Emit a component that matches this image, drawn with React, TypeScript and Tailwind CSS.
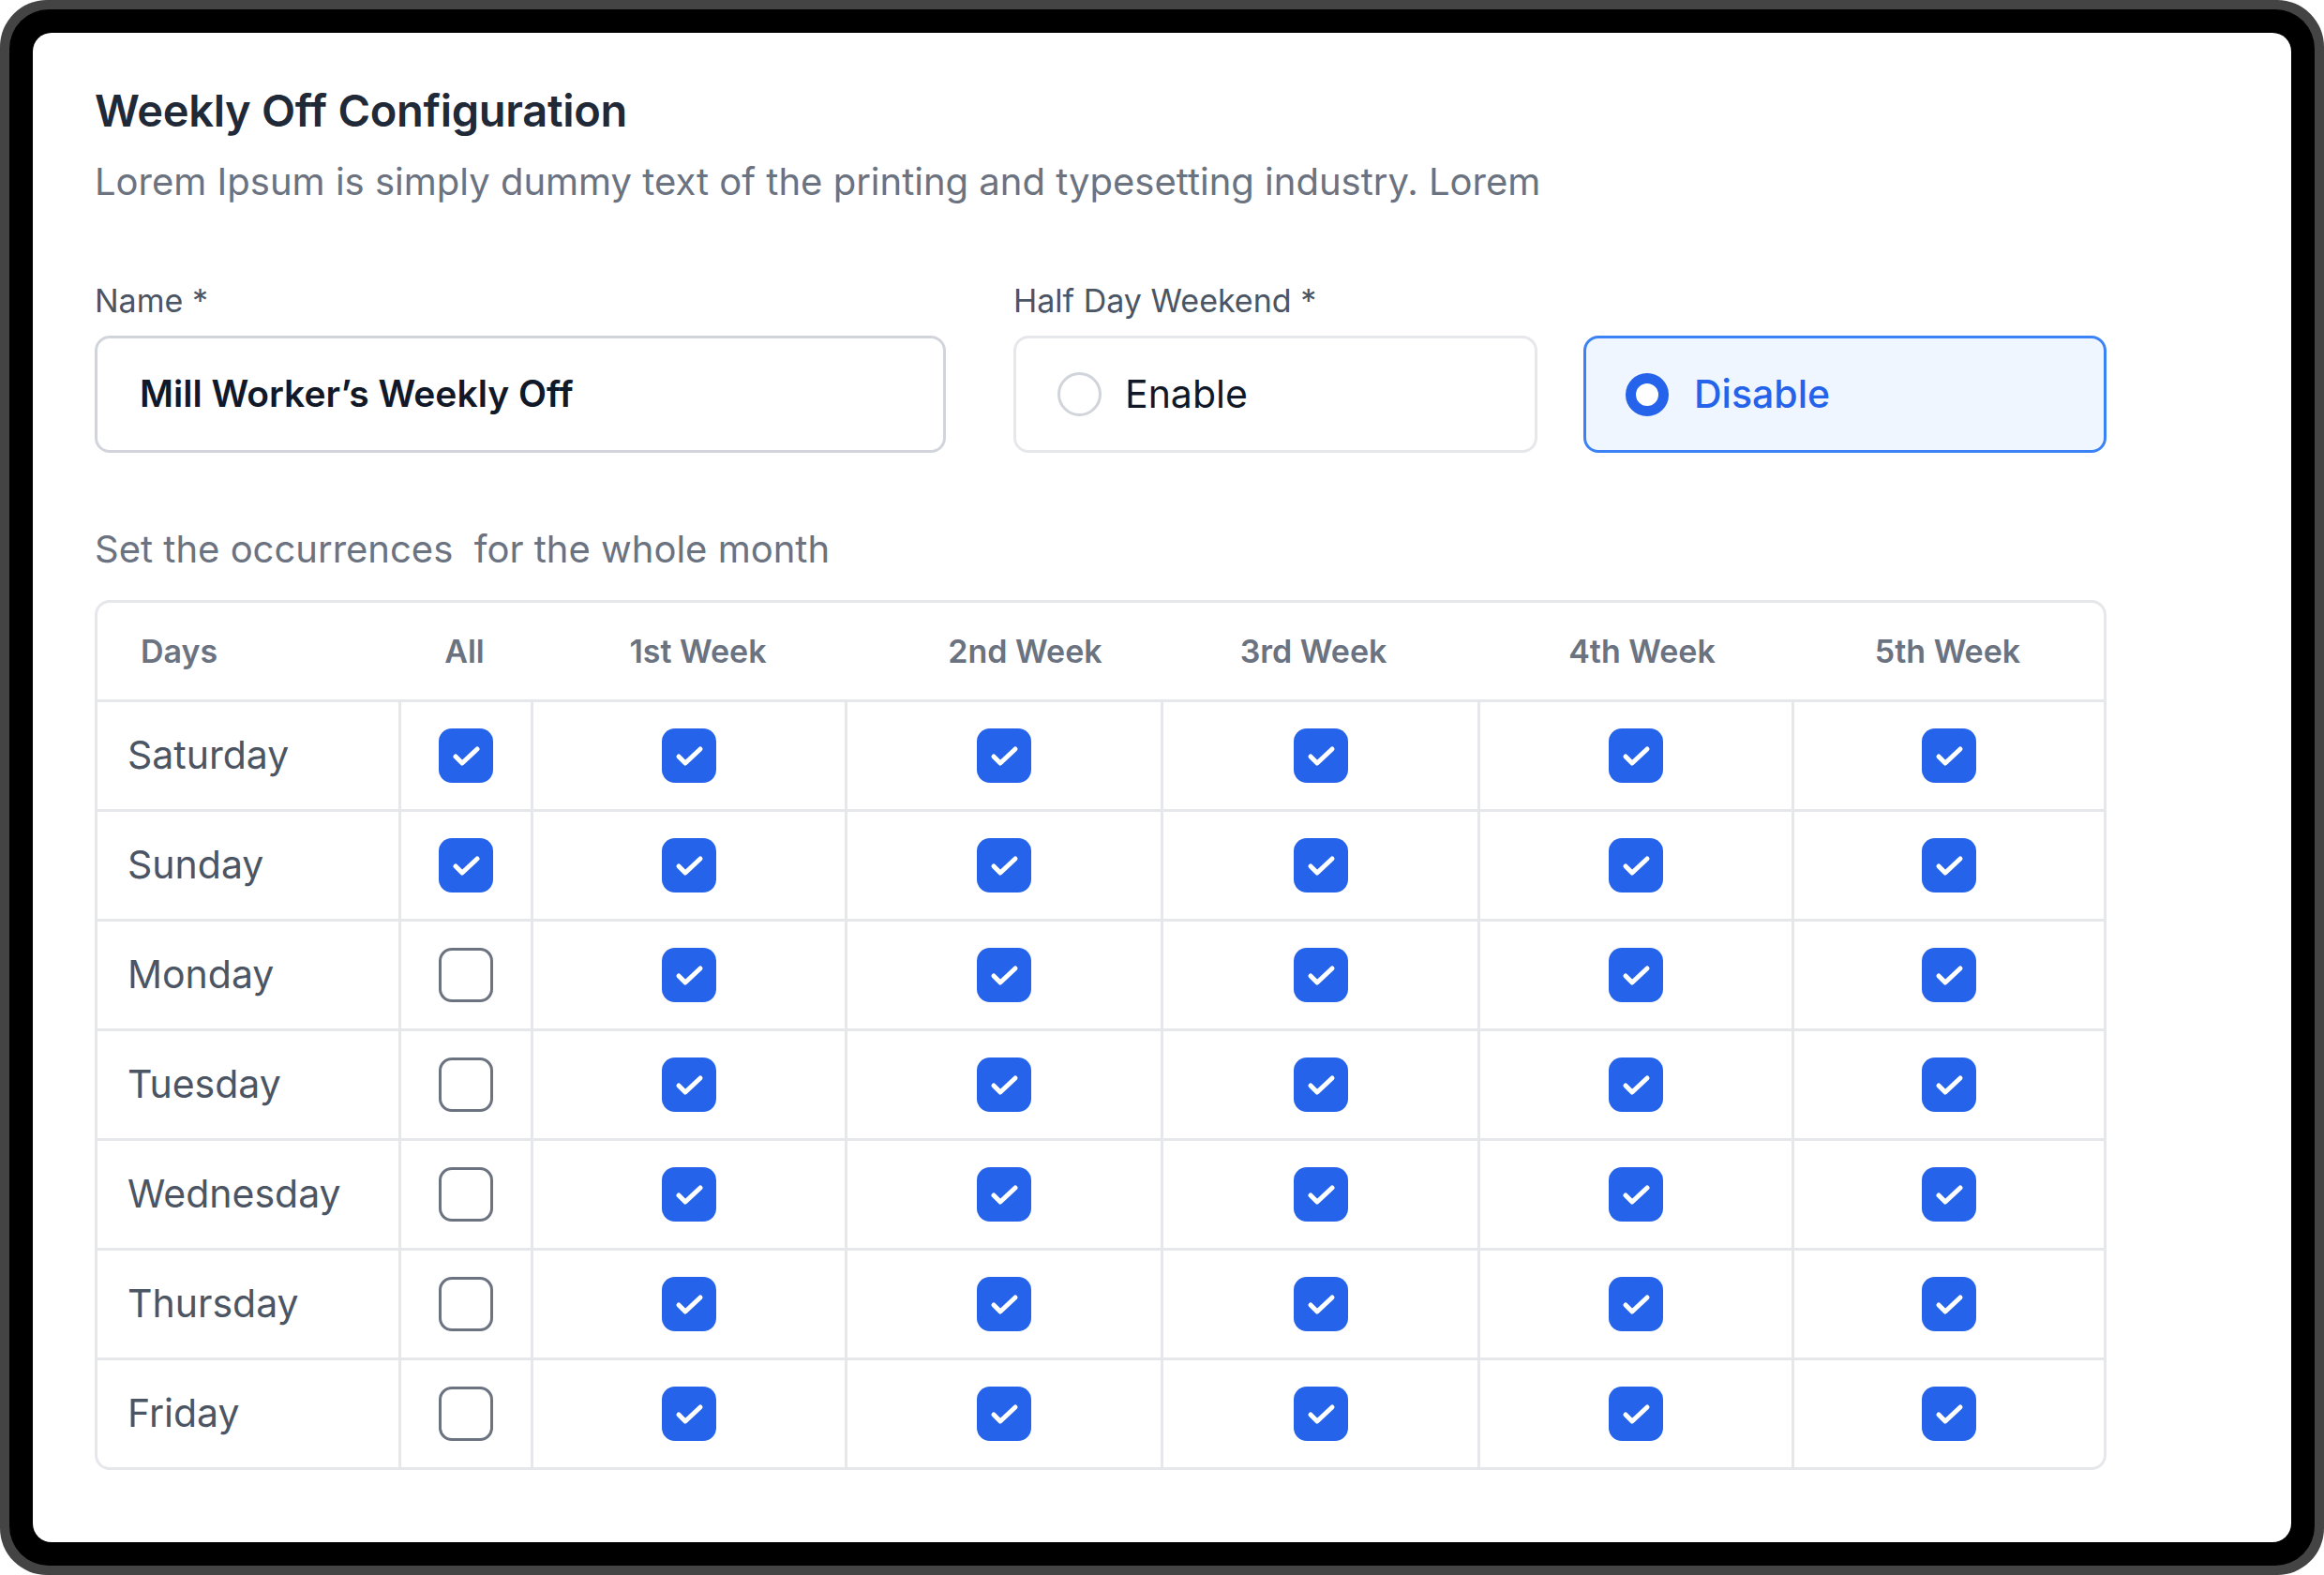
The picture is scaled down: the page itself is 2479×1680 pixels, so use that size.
import React from 'react';

const days = ['Saturday', 'Sunday', 'Monday', 'Tuesday', 'Wednesday', 'Thursday', 'Friday'];
const weeks = ['1st Week', '2nd Week', '3rd Week', '4th Week', '5th Week'];
// header labels sit a little off the column centres
const weekHeadPad = ['pl-[22px]', 'pl-[48px]', 'pr-[12px]', 'pl-[16px]', ''];
const allChecked = ['Saturday', 'Sunday'];

const cols = 'grid grid-cols-[321px_141px_335px_337px_338px_335px_333px]';

function Checkbox({ checked }: { checked: boolean }) {
  if (!checked) {
    return <div className="w-[58px] h-[58px] rounded-[14px] border-[3px] border-[#6b7280] bg-white" />;
  }
  return (
    <div className="w-[58px] h-[58px] rounded-[14px] bg-[#2563eb] flex items-center justify-center">
      <svg width="58" height="58" viewBox="0 0 58 58" fill="none">
        <polyline
          points="18,30 25,37 41,22"
          stroke="white"
          strokeWidth="5"
          strokeLinecap="round"
          strokeLinejoin="round"
        />
      </svg>
    </div>
  );
}

function RadioOption({ label, selected }: { label: string; selected: boolean }) {
  return (
    <div
      className={
        selected
          ? 'w-[558px] h-[125px] rounded-[16px] border-[3px] border-[#3b82f6] bg-[#eff6ff] flex items-center pl-[42px] gap-[27px]'
          : 'w-[559px] h-[125px] rounded-[16px] border-[3px] border-[#e5e7eb] bg-white flex items-center pl-[44px] gap-[25px]'
      }
    >
      {selected ? (
        <span className="w-[46px] h-[46px] rounded-full border-[11px] border-[#2563eb] bg-white" />
      ) : (
        <span className="w-[47px] h-[47px] rounded-full border-[3px] border-[#d1d5db] bg-white" />
      )}
      <span
        className={
          selected
            ? 'text-[41px] font-medium text-[#2563eb] leading-none'
            : 'text-[41px] text-[#111827] leading-none'
        }
      >
        {label}
      </span>
    </div>
  );
}

export default function App() {
  return (
    <div className="w-[2479px] h-[1680px] bg-white font-['Inter',sans-serif]">
      {/* device frame */}
      <div className="h-full rounded-[50px] bg-[#444444] p-[10px]">
        <div className="h-full rounded-[42px] bg-black p-[25px]">
          <div className="h-full rounded-[20px] bg-white pl-[66px] pt-[56px]">
            <div className="w-[2146px]">
              <h1 className="text-[47px] leading-[54px] font-semibold text-[#1f2937] tracking-[-0.3px]">
                Weekly Off Configuration
              </h1>
              <p className="mt-[24px] text-[40px] leading-[50px] text-[#6b7280]">
                Lorem Ipsum is simply dummy text of the printing and typesetting industry. Lorem
              </p>

              <div className="mt-[80px] flex">
                <div className="w-[908px]">
                  <label className="block text-[34px] leading-[44px] text-[#4b5563]">Name *</label>
                  <div className="mt-[15px] h-[125px] rounded-[16px] border-[3px] border-[#d1d5db] flex items-center pl-[45px]">
                    <span className="text-[39px] font-semibold text-[#111827]">Mill Worker’s Weekly Off</span>
                  </div>
                </div>
                <div className="ml-[72px]">
                  <label className="block text-[34px] leading-[44px] text-[#4b5563]">Half Day Weekend *</label>
                  <div className="mt-[15px] flex gap-[49px]">
                    <RadioOption label="Enable" selected={false} />
                    <RadioOption label="Disable" selected={true} />
                  </div>
                </div>
              </div>

              <p className="mt-[78px] text-[40px] leading-[50px] text-[#6b7280] whitespace-pre">
                Set the occurrences  for the whole month
              </p>

              <div className="mt-[29px] rounded-[16px] border-[3px] border-[#e5e7eb] overflow-hidden">
                <div className={`${cols} h-[103px] items-center text-[34px] font-semibold text-[#6b7280]`}>
                  <div className="pl-[46px]">Days</div>
                  <div className="text-center">All</div>
                  {weeks.map((w, i) => (
                    <div key={w} className={`text-center ${weekHeadPad[i]}`}>
                      {w}
                    </div>
                  ))}
                </div>
                {days.map((d) => (
                  <div key={d} className={`${cols} h-[117px] border-t-[3px] border-[#e5e7eb]`}>
                    <div className="pl-[32px] flex items-center text-[41px] text-[#4b5563]">{d}</div>
                    <div className="border-l-[3px] border-[#e5e7eb] flex items-center justify-center">
                      <Checkbox checked={allChecked.includes(d)} />
                    </div>
                    {weeks.map((w) => (
                      <div key={w} className="border-l-[3px] border-[#e5e7eb] flex items-center justify-center">
                        <Checkbox checked={true} />
                      </div>
                    ))}
                  </div>
                ))}
              </div>
            </div>
          </div>
        </div>
      </div>
    </div>
  );
}
